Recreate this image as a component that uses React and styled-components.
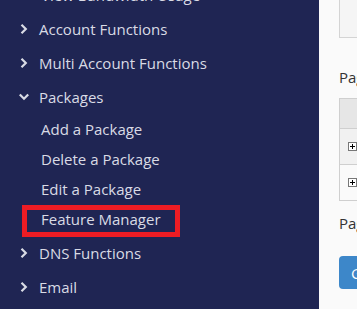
import React from "react";
import styled, { createGlobalStyle } from "styled-components";

const GlobalStyle = createGlobalStyle`
  html, body { margin: 0; padding: 0; overflow: hidden; background: #fafafa; }
  body { font-family: "Open Sans", "Liberation Sans", sans-serif; }
`;

const Layout = styled.div`
  display: flex;
  width: 357px;
  height: 309px;
  overflow: hidden;
`;

const Sidebar = styled.nav`
  width: 319px;
  flex-shrink: 0;
  background: #1f2553;
  display: flex;
  flex-direction: column;
  margin-top: -20px;
  height: 329px;
`;

const Section = styled.div`
  display: flex;
  align-items: center;
  height: 34px;
  padding-left: 19px;
  gap: 10px;
  color: #d9dbe5;
  font-size: 15px;
`;

const Chevron = styled.svg`
  width: 10px;
  height: 10px;
  flex-shrink: 0;
`;

const SubList = styled.div`
  display: flex;
  flex-direction: column;
  padding-bottom: 2px;
`;

const SubItem = styled.div`
  position: relative;
  height: 30px;
  display: flex;
  align-items: center;
  padding-left: 41px;
  color: #d9dbe5;
  font-size: 15px;
`;

const Highlight = styled.span`
  position: absolute;
  left: 22px;
  top: 1px;
  width: 158px;
  height: 32px;
  box-sizing: border-box;
  border: 5px solid #ed1c24;
`;

const Main = styled.main`
  flex: 1;
  background: #fafafa;
  padding-left: 20px;
  display: flex;
  flex-direction: column;
`;

const TopBox = styled.div`
  height: 38px;
  box-sizing: border-box;
  background: #f5f5f5;
  border: 1px solid #d4d4d4;
  border-top: none;
`;

const PageLabel = styled.div`
  color: #333;
  font-size: 15px;
  line-height: 20px;
  margin-top: ${({ top }) => top}px;
  white-space: nowrap;
`;

const Table = styled.div`
  margin-top: 11px;
  border: 1px solid #cfcfcf;
  border-right: none;
  display: flex;
  flex-direction: column;
`;

const HeadRow = styled.div`
  height: 29px;
  background: #e6e6e6;
  border-bottom: 1px solid #cfcfcf;
`;

const Row = styled.div`
  height: 35px;
  background: ${({ alt }) => (alt ? "#fafafa" : "#f1f1f1")};
  border-bottom: ${({ last }) => (last ? "none" : "1px solid #cfcfcf")};
  display: flex;
  align-items: center;
  padding-left: 8px;
`;

const Expander = styled.span`
  width: 9px;
  height: 9px;
  box-sizing: border-box;
  border: 1px solid #777;
  background: #fff;
  position: relative;
  &::before, &::after {
    content: "";
    position: absolute;
    background: #000;
  }
  &::before { left: 1px; right: 1px; top: 3px; height: 1px; }
  &::after { top: 1px; bottom: 1px; left: 3px; width: 1px; }
`;

const Button = styled.button`
  margin-top: 23px;
  height: 33px;
  width: 60px;
  border: none;
  border-radius: 4px;
  background: #3d87c9;
  color: #fff;
  font-family: inherit;
  font-size: 15px;
  text-align: left;
  padding-left: 12px;
`;

const Right = () => (
  <Chevron viewBox="0 0 10 10">
    <polyline points="2.5,0.8 6.8,5 2.5,9.2" fill="none" stroke="#d9dbe5" strokeWidth="2.2" />
  </Chevron>
);

const Down = () => (
  <Chevron viewBox="0 0 10 10">
    <polyline points="0.8,2.5 5,6.8 9.2,2.5" fill="none" stroke="#d9dbe5" strokeWidth="2.2" />
  </Chevron>
);

export default function App() {
  return (
    <>
      <GlobalStyle />
      <Layout>
        <Sidebar>
          <SubList>
            <SubItem>View Bandwidth Usage</SubItem>
          </SubList>
          <Section><Right />Account Functions</Section>
          <Section><Right />Multi Account Functions</Section>
          <Section><Down />Packages</Section>
          <SubList>
            <SubItem>Add a Package</SubItem>
            <SubItem>Delete a Package</SubItem>
            <SubItem>Edit a Package</SubItem>
            <SubItem>Feature Manager<Highlight /></SubItem>
          </SubList>
          <Section><Right />DNS Functions</Section>
          <Section><Right />Email</Section>
        </Sidebar>
        <Main>
          <TopBox />
          <PageLabel top={29}>Page</PageLabel>
          <Table>
            <HeadRow />
            <Row><Expander /></Row>
            <Row alt last><Expander /></Row>
          </Table>
          <PageLabel top={12}>Page</PageLabel>
          <Button>Go</Button>
        </Main>
      </Layout>
    </>
  );
}
